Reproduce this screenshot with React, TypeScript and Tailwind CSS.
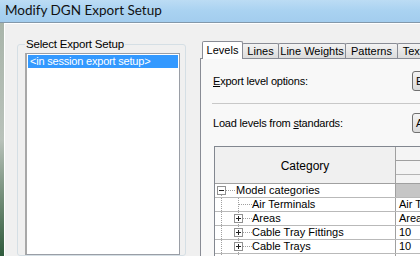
import React from 'react';

interface Tab {
    label: string;
    width: string;
}

interface Row {
    label: string;
    level: 0 | 1;
    expand: 'minus' | 'plus' | 'none';
    value: string;
}

const TABS: Tab[] = [
    { label: 'Levels', width: 'w-[41px]' },
    { label: 'Lines', width: 'w-[37px]' },
    { label: 'Line Weights', width: 'w-[68px]' },
    { label: 'Patterns', width: 'w-[53px]' },
    { label: 'Text Fonts', width: 'w-[62px]' },
];

const ROWS: Row[] = [
    { label: 'Model categories', level: 0, expand: 'minus', value: '' },
    { label: 'Air Terminals', level: 1, expand: 'none', value: 'Air Terminals' },
    { label: 'Areas', level: 1, expand: 'plus', value: 'Areas' },
    { label: 'Cable Tray Fittings', level: 1, expand: 'plus', value: '10' },
    { label: 'Cable Trays', level: 1, expand: 'plus', value: '10' },
    { label: 'Casework', level: 1, expand: 'plus', value: '10' },
];

const ExpandBox: React.FC<{ x: number; kind: 'minus' | 'plus' }> = ({ x, kind }) => (
    <g>
        <rect x={x + 0.5} y={2.5} width={8} height={8} fill="#fff" stroke="#919191" />
        <line x1={x + 2} y1={6.5} x2={x + 7} y2={6.5} stroke="#222" />
        {kind === 'plus' && <line x1={x + 4.5} y1={4} x2={x + 4.5} y2={9} stroke="#222" />}
    </g>
);

// tree connectors drawn for the first 37px of each Category cell
const TreeGlyph: React.FC<{ row: Row }> = ({ row }) => (
    <svg width={37} height={13} className="shrink-0">
        {row.level === 0 ? (
            <>
                <line x1={6.5} y1={11} x2={6.5} y2={13} stroke="#a0a0a0" strokeDasharray="1 1" />
                <line x1={11} y1={6.5} x2={20} y2={6.5} stroke="#a0a0a0" strokeDasharray="1 1" />
                <ExpandBox x={2} kind="minus" />
            </>
        ) : (
            <>
                <line x1={6.5} y1={0} x2={6.5} y2={13} stroke="#a0a0a0" strokeDasharray="1 1" />
                <line x1={23.5} y1={0} x2={23.5} y2={13} stroke="#a0a0a0" strokeDasharray="1 1" />
                <line
                    x1={row.expand === 'none' ? 24 : 28}
                    y1={6.5}
                    x2={37}
                    y2={6.5}
                    stroke="#a0a0a0"
                    strokeDasharray="1 1"
                />
                {row.expand !== 'none' && <ExpandBox x={19} kind={row.expand} />}
            </>
        )}
    </svg>
);

const TitleBar: React.FC = () => (
    <div className="h-[23px] shrink-0 border-b border-[#8398aa] bg-gradient-to-b from-[#bcdcf4] via-[#a9d2f1] to-[#a3cdee] pl-[5px] flex items-center">
        <span className="font-['Lato','Liberation_Sans',sans-serif] text-[13.5px] text-[#111] leading-none">
            Modify DGN Export Setup
        </span>
    </div>
);

const SetupList: React.FC = () => (
    <div className="pl-[12px] pt-[13px] w-[195px] shrink-0 flex font-['Liberation_Sans',Arial,sans-serif]">
        <fieldset className="w-[169px] border border-[#d5dfe5] rounded-[3px] pl-[7px] flex flex-col">
            <legend className="px-[1px] text-[11.5px] tracking-[-0.2px] leading-[14px] text-black">
                Select Export Setup
            </legend>
            <div className="mt-[2px] w-[155px] flex-1 border border-[#9a9ea6] border-l-[2px] border-l-[#a8a8a8] bg-white p-[1px]">
                <div className="h-[13px] bg-[#3399ff] text-white text-[11px] tracking-[-0.2px] leading-[13px] pl-[2px] whitespace-nowrap">
                    &lt;in session export setup&gt;
                </div>
            </div>
        </fieldset>
    </div>
);

const TabStrip: React.FC = () => (
    <div className="h-[17px] flex items-end pl-[2px]">
        {TABS.map((tab, i) =>
            i === 0 ? (
                <div
                    key={tab.label}
                    className={`${tab.width} h-[18px] -mb-px shrink-0 relative z-10 bg-white border border-b-0 border-[#898c95] rounded-t-[2px] text-[11px] leading-[16px] text-center text-black`}
                >
                    {tab.label}
                </div>
            ) : (
                <div
                    key={tab.label}
                    className={`${tab.width} h-[15px] -ml-px shrink-0 bg-gradient-to-b from-[#f3f3f3] to-[#dcdcdc] border border-b-0 border-[#898c95] rounded-t-[2px] text-[11px] leading-[14px] text-center text-black whitespace-nowrap`}
                >
                    {tab.label}
                </div>
            ),
        )}
    </div>
);

const OptionRow: React.FC<{ before: string; key_: string; after: string; button: string }> = ({
    before,
    key_,
    after,
    button,
}) => (
    <div className="flex items-center h-[20px]">
        <span className="w-[199px] text-[11px] tracking-[-0.2px] text-black whitespace-nowrap">
            {before}
            <span className="underline">{key_}</span>
            {after}
        </span>
        <div className="w-[75px] h-[20px] border border-[#707070] rounded-[3px] bg-gradient-to-b from-[#f4f4f4] to-[#dadada] text-[11px] leading-[18px] pl-[3px]">
            {button}
        </div>
    </div>
);

const LevelsTable: React.FC = () => (
    <div className="w-[360px] border border-[#828790] bg-white text-[11px] text-black">
        <div className="flex h-[37px] border-b border-[#a0a0a0]">
            <div className="w-[181px] border-r border-[#a0a0a0] bg-[#f0f0f0] flex items-center justify-center pt-[2px] text-[12px]">
                Category
            </div>
            <div className="flex-1 flex flex-col bg-[#f4f4f4]">
                <div className="h-[14px] border-b border-[#a0a0a0]" />
                <div className="h-[14px] border-b border-[#b4b4b4]" />
                <div className="flex-1" />
            </div>
        </div>
        {ROWS.map((row) => (
            <div key={row.label} className="flex h-[14px] border-b border-[#b9b9b9]">
                <div className="w-[181px] border-r border-[#a0a0a0] flex items-center">
                    <TreeGlyph row={row} />
                    <span
                        className={`leading-[13px] whitespace-nowrap ${row.level === 0 ? '-ml-[16px]' : ''}`}
                    >
                        {row.label}
                    </span>
                </div>
                <div
                    className={`flex-1 pl-[3px] leading-[13px] whitespace-nowrap ${row.level === 0 ? 'bg-[#c6c6c6]' : ''}`}
                >
                    {row.value}
                </div>
            </div>
        ))}
    </div>
);

const LevelsPanel: React.FC = () => (
    <div className="w-[420px] shrink-0 pt-[17px] flex flex-col font-['Liberation_Sans',Arial,sans-serif]">
        <TabStrip />
        <div className="flex-1 border-t border-l border-[#898c95] bg-[#f8f8f8] pl-[12px] pt-[12px]">
            <OptionRow before="" key_="E" after="xport level options:" button="Edit..." />
            <div className="mt-[12px] h-px bg-[#c8c8c8] -ml-[1px]" />
            <div className="mt-[9px]">
                <OptionRow before="Load levels from " key_="s" after="tandards:" button="Add..." />
            </div>
            <div className="mt-[13px] ml-[1px]">
                <LevelsTable />
            </div>
        </div>
    </div>
);

export default function App() {
    return (
        <div className="w-[420px] h-[256px] overflow-hidden flex flex-col bg-[#f0f0f0]">
            <TitleBar />
            <div className="flex-1 flex min-h-0">
                <div className="w-[4px] shrink-0 bg-gradient-to-b from-[#a9b5aa] via-[#b9c2ba] to-[#2f5b3c]" />
                <div className="flex-1 flex min-w-0 border-l border-t border-white bg-[#f0f0f0] overflow-hidden">
                    <SetupList />
                    <LevelsPanel />
                </div>
            </div>
        </div>
    );
}
